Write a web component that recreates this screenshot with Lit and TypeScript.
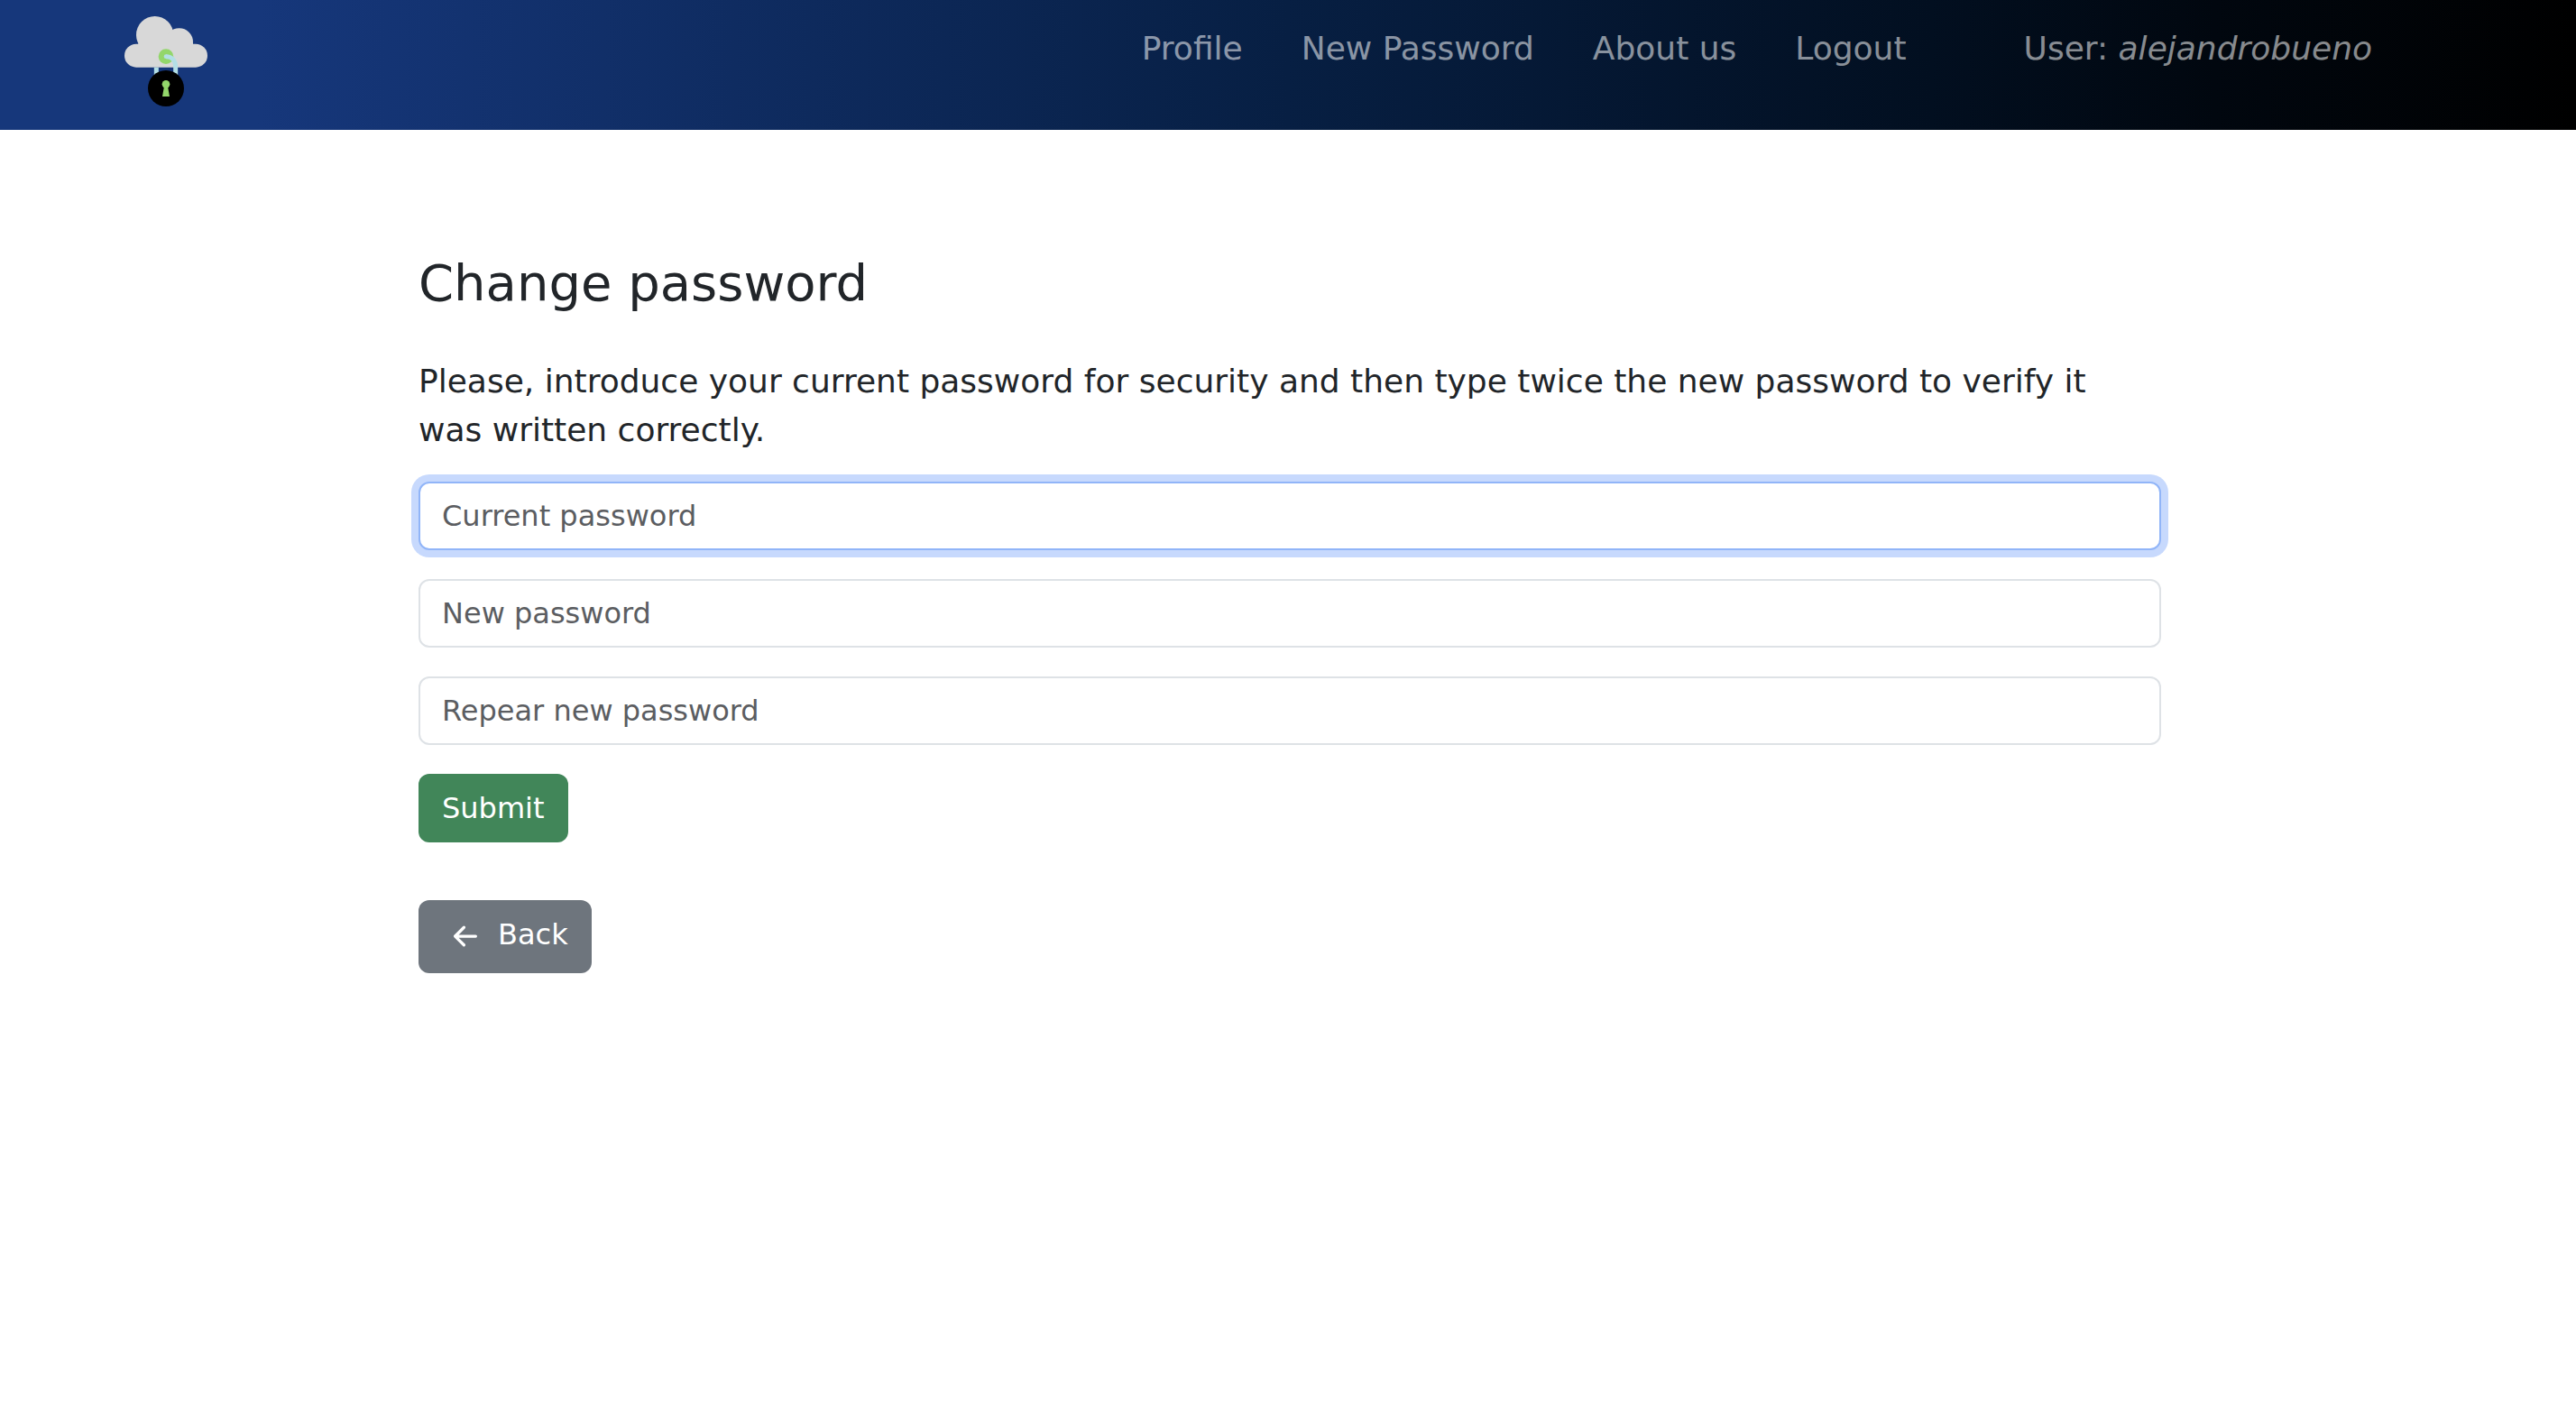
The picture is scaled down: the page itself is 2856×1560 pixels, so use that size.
import { LitElement, html, css } from "lit";
import { customElement, state } from "lit/decorators.js";

interface Field {
  name: string;
  placeholder: string;
}

@customElement("brand-logo")
export class BrandLogo extends LitElement {
  static styles = css`
    :host {
      display: block;
    }
    .logo {
      display: block;
      width: 92px;
      height: 100px;
    }
  `;

  render() {
    return html`
      <svg class="logo" viewBox="0 0 276 300" role="img" aria-label="Cloud lock">
        <g fill="#d8d8d8">
          <circle cx="101" cy="62" r="62" />
          <circle cx="182" cy="86" r="46" />
          <rect x="0" y="92" width="276" height="78" rx="39" />
          <rect x="46" y="88" width="182" height="60" />
        </g>
        <circle cx="138" cy="134" r="25" fill="#93d66b" />
        <path d="M106 170V200M138 134C158 134 170 148 170 168V200" fill="none" stroke="#b3dfe6" stroke-width="15" />
        <circle cx="138" cy="134" r="7" fill="#b3dfe6" />
        <circle cx="138" cy="240" r="60" fill="#000" />
        <path d="M132 233H144L150 267H126Z" fill="#93d66b" />
        <circle cx="138" cy="226" r="13" fill="#93d66b" />
      </svg>
    `;
  }
}

@customElement("site-header")
export class SiteHeader extends LitElement {
  static styles = css`
    :host {
      display: block;
      background: linear-gradient(90deg, #16377b 10%, #071f43 50%, #020f20 75%, #01070f 86%, #000000 100%);
    }
    .bar {
      display: flex;
      align-items: flex-start;
      justify-content: space-between;
      min-height: 108px;
      padding: 18px 226px 18px 138px;
    }
    .nav {
      display: flex;
      gap: 65px;
      padding-top: 9px;
      font-size: 36px;
      line-height: 54px;
      color: rgba(255, 255, 255, 0.55);
    }
    .link {
      color: inherit;
      text-decoration: none;
    }
    .link:hover {
      color: rgba(255, 255, 255, 0.75);
    }
    .user {
      padding-left: 65px;
    }
  `;

  private links = ["Profile", "New Password", "About us", "Logout"];

  render() {
    return html`
      <header class="bar">
        <a class="link" href="#home"><brand-logo></brand-logo></a>
        <nav class="nav">
          ${this.links.map(
            (label) => html`<a class="link" href="#${label.toLowerCase().replace(" ", "-")}">${label}</a>`
          )}
          <span class="user">User: <em>alejandrobueno</em></span>
        </nav>
      </header>
    `;
  }
}

@customElement("app-root")
export class AppRoot extends LitElement {
  static styles = css`
    :host {
      display: block;
      min-height: 100vh;
      background: #ffffff;
      color: #212529;
      font-family: Verdana, "DejaVu Sans", sans-serif;
      font-size: 36px;
      line-height: 54px;
    }
    .content {
      padding: 136px 16.1% 64px 464px;
    }
    .title {
      margin: 0 0 48px;
      font-size: 56px;
      font-weight: 400;
      line-height: 68px;
    }
    .intro {
      margin: 0 0 30px;
      padding-right: 48px;
    }
    .form {
      display: flex;
      flex-direction: column;
      align-items: flex-start;
      gap: 32px;
      margin: 0 0 64px;
    }
    .input {
      box-sizing: border-box;
      width: 100%;
      height: 76px;
      padding: 12px 24px;
      border: 2px solid #dee2e6;
      border-radius: 12px;
      outline: 0;
      background: #ffffff;
      color: inherit;
      font: inherit;
      font-size: 32px;
      line-height: 48px;
    }
    .input::placeholder {
      color: #5b5d61;
      opacity: 1;
    }
    .input.current {
      border-color: #91b5f8;
      box-shadow: 0 0 0 8px #c7d9fd;
    }
    .button {
      display: inline-flex;
      align-items: flex-start;
      box-sizing: border-box;
      padding: 14px 26px;
      border: 0;
      border-radius: 12px;
      color: #ffffff;
      font: inherit;
      font-size: 32px;
      line-height: 48px;
      text-decoration: none;
      cursor: pointer;
    }
    .submit {
      background: #418659;
    }
    .back {
      gap: 10px;
      height: 81px;
      background: #6e757d;
    }
    .arrow {
      width: 52px;
      height: 52px;
      fill: currentColor;
    }
  `;

  @state() private current = "current";

  private fields: Field[] = [
    { name: "current", placeholder: "Current password" },
    { name: "new", placeholder: "New password" },
    { name: "repeat", placeholder: "Repear new password" },
  ];

  render() {
    return html`
      <site-header></site-header>
      <main class="content">
        <h1 class="title">Change password</h1>
        <p class="intro">
          Please, introduce your current password for security and then type twice the new password to verify it was
          written correctly.
        </p>
        <form class="form" @submit=${(e: Event) => e.preventDefault()}>
          ${this.fields.map(
            (f) => html`<input
              class="input ${this.current === f.name ? "current" : ""}"
              type="password"
              name=${f.name}
              aria-label=${f.placeholder}
              placeholder=${f.placeholder}
              @focus=${() => (this.current = f.name)}
            />`
          )}
          <button class="button submit" type="submit">Submit</button>
        </form>
        <a class="button back" href="#profile">
          <svg class="arrow" viewBox="0 0 16 16" aria-hidden="true">
            <path
              d="M12 8a.5.5 0 0 1-.5.5H5.707l2.147 2.146a.5.5 0 0 1-.708.708l-3-3a.5.5 0 0 1 0-.708l3-3a.5.5 0 1 1 .708.708L5.707 7.5H11.5a.5.5 0 0 1 .5.5z"
            />
          </svg>
          <span>Back</span>
        </a>
      </main>
    `;
  }
}
